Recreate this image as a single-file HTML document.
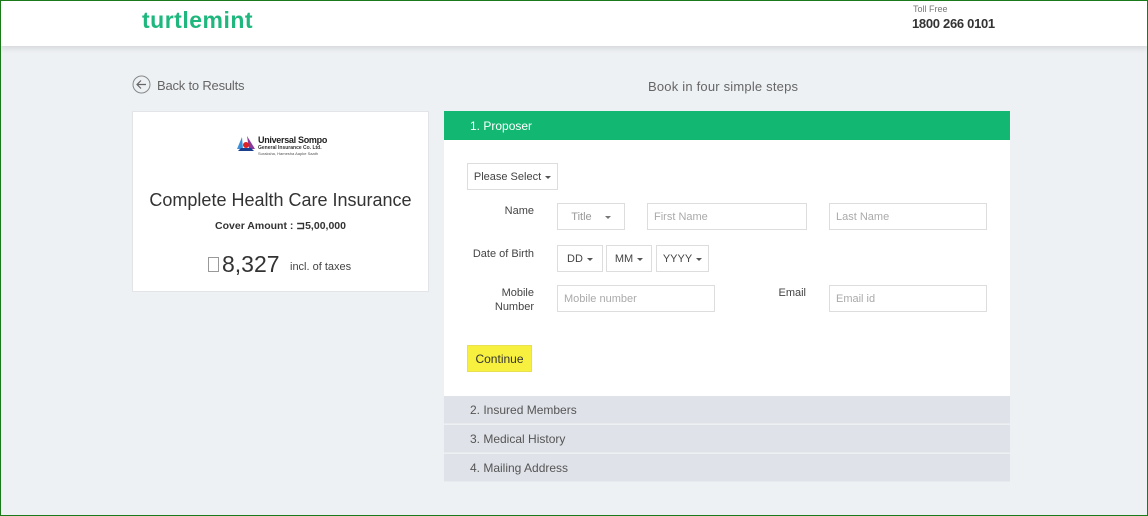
<!DOCTYPE html>
<html><head><meta charset="utf-8"><style>
*{box-sizing:border-box;margin:0;padding:0}
body{width:1148px;height:516px;overflow:hidden;background:#eef1f4;font-family:"Liberation Sans",sans-serif;position:relative;color:#444}
.a{position:absolute}
.frame{position:absolute;left:0;top:0;width:1148px;height:516px;border:1px solid #1a7a1a;pointer-events:none;z-index:10}
.hdr{left:0;top:0;width:1148px;height:46px;background:#fff;box-shadow:0 2px 6px rgba(0,0,0,.12)}
.inp{position:absolute;border:1px solid #ddd;background:#fff;font-size:11px;color:#aaa;padding-left:6px;height:27px;line-height:26px}
.sel{position:absolute;border:1px solid #ddd;background:#fff;font-size:11px;color:#444;height:27px;line-height:26px;text-align:center}
.car{display:inline-block;width:0;height:0;border-left:3px solid transparent;border-right:3px solid transparent;border-top:3px solid #555;vertical-align:middle;margin-left:4px}
.lbl{position:absolute;font-size:11px;color:#444;text-align:right}
.row{position:absolute;left:444px;width:566px;height:28px;background:#dfe2e8;font-size:12px;color:#555;padding-left:26px;line-height:29px;border-bottom:1px solid #e8eaee}
</style></head><body>
<div class="a hdr"></div>
<div class="a" style="left:142px;top:7px;font-size:23px;color:#1fb77e;font-weight:bold;letter-spacing:0.5px">turtlemint</div>
<div class="a" style="left:913px;top:4px;font-size:9px;color:#777">Toll Free</div>
<div class="a" style="left:912px;top:16px;font-size:13px;color:#333;font-weight:bold;letter-spacing:-.3px">1800 266 0101</div>

<svg class="a" style="left:132px;top:75px" width="19" height="19" viewBox="0 0 19 19"><circle cx="9.5" cy="9.5" r="8.5" fill="none" stroke="#888" stroke-width="1"/><path d="M14 9.5H5M9 5.5L5 9.5L9 13.5" fill="none" stroke="#666" stroke-width="1.2"/></svg>
<div class="a" style="left:157px;top:78px;font-size:13px;color:#666;letter-spacing:-.2px">Back to Results</div>
<div class="a" style="left:648px;top:79px;font-size:13px;color:#666;letter-spacing:.2px">Book in four simple steps</div>

<div class="a" style="left:132px;top:111px;width:297px;height:181px;background:#fff;border:1px solid #e2e4e8"></div>
<svg class="a" style="left:235px;top:135px" width="22" height="18" viewBox="0 0 22 18"><path d="M7 2L2 14h6z" fill="#3a8fd8"/><path d="M12 1l8 13h-6z" fill="#8a3a9a"/><path d="M3 16h16l-3-3H6z" fill="#1b3f8f"/><circle cx="11" cy="10" r="3" fill="#d22"/></svg>
<div class="a" style="left:258px;top:135px;font-size:9px;font-weight:bold;color:#222;letter-spacing:-.3px">Universal Sompo</div>
<div class="a" style="left:258px;top:145px;font-size:5px;font-weight:bold;color:#333">General Insurance Co. Ltd.</div>
<div class="a" style="left:258px;top:151px;font-size:4px;color:#555">Suraksha, Hamesha Aapke Saath</div>
<div class="a" style="left:132px;top:190px;width:297px;text-align:center;font-size:18px;color:#333">Complete Health Care Insurance</div>
<div class="a" style="left:132px;top:220px;width:297px;text-align:center;font-size:10.5px;color:#333;font-weight:bold">Cover Amount : ⊐5,00,000</div>
<div class="a" style="left:208px;top:257px;width:11px;height:15px;border:1px solid #999"></div>
<div class="a" style="left:222px;top:251px;font-size:23px;color:#333">8,327</div>
<div class="a" style="left:290px;top:261px;font-size:11px;color:#444">incl. of taxes</div>

<div class="a" style="left:444px;top:111px;width:566px;height:29px;background:#12b872;color:#fff;font-size:12px;padding-left:26px;line-height:30px">1. Proposer</div>
<div class="a" style="left:444px;top:140px;width:566px;height:256px;background:#fff"></div>
<div class="sel" style="left:467px;top:163px;width:91px">Please Select<span class="car"></span></div>
<div class="lbl" style="left:480px;top:205px;width:54px">Name</div>
<div class="sel" style="left:557px;top:203px;width:68px;color:#999">Title <span class="car" style="margin-left:10px;border-top-color:#777"></span></div>
<div class="inp" style="left:647px;top:203px;width:160px">First Name</div>
<div class="inp" style="left:829px;top:203px;width:158px">Last Name</div>
<div class="lbl" style="left:460px;top:248px;width:74px">Date of Birth</div>
<div class="sel" style="left:557px;top:245px;width:46px">DD<span class="car"></span></div>
<div class="sel" style="left:606px;top:245px;width:46px">MM<span class="car"></span></div>
<div class="sel" style="left:656px;top:245px;width:53px">YYYY<span class="car"></span></div>
<div class="lbl" style="left:480px;top:286px;width:54px;line-height:14px">Mobile<br>Number</div>
<div class="inp" style="left:557px;top:285px;width:158px">Mobile number</div>
<div class="lbl" style="left:760px;top:287px;width:46px">Email</div>
<div class="inp" style="left:829px;top:285px;width:158px">Email id</div>
<div class="a" style="left:467px;top:345px;width:65px;height:27px;background:#f7f03f;border:1px solid #e8e050;font-size:12px;color:#333;text-align:center;line-height:26px">Continue</div>

<div class="row" style="top:396px">2. Insured Members</div>
<div class="row" style="top:425px">3. Medical History</div>
<div class="row" style="top:454px">4. Mailing Address</div>
<div class="frame"></div>
</body></html>
